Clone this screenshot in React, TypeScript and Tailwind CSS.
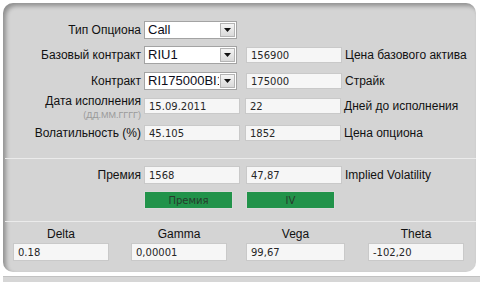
import React from "react";

const labelFont = "font-['Liberation_Sans',Arial,sans-serif] text-[12px] text-[#111]";
const inputFont = "font-['DejaVu_Sans',Verdana,sans-serif] text-[10px] text-[#262626]";

type FieldProps = { value: string; className?: string };

const Field: React.FC<FieldProps> = ({ value, className = "" }) => (
  <div
    className={`flex shrink-0 items-center overflow-hidden whitespace-nowrap border border-[#c9c9c9] bg-[#f6f6f6] pl-[4px] ${inputFont} ${className}`}
  >
    {value}
  </div>
);

const Select: React.FC<{ value: string }> = ({ value }) => (
  <div className="flex h-[18px] w-[93px] shrink-0 items-stretch border border-[#a3a3a3] bg-white">
    <div className="flex min-w-0 flex-1 items-center overflow-hidden whitespace-nowrap pl-[3px] font-['Liberation_Sans',Arial,sans-serif] text-[13px] text-[#0d0d1a]">
      {value}
    </div>
    <div className="m-px flex w-[15px] shrink-0 items-center justify-center border border-[#b4b4b4] bg-gradient-to-b from-[#f4f4f4] to-[#d9d9d9]">
      <svg width="7" height="4" viewBox="0 0 7 4" aria-hidden="true">
        <path d="M0 0h7L3.5 4z" fill="#111" />
      </svg>
    </div>
  </div>
);

const Label: React.FC<{ children: React.ReactNode }> = ({ children }) => (
  <div className={`w-[141px] shrink-0 pr-[3px] text-right whitespace-nowrap ${labelFont}`}>{children}</div>
);

const SideLabel: React.FC<{ children: React.ReactNode }> = ({ children }) => (
  <div className={`ml-[3px] whitespace-nowrap ${labelFont}`}>{children}</div>
);

const GreenButton: React.FC<{ text: string; className?: string }> = ({ text, className = "" }) => (
  <div
    className={`flex h-[18px] shrink-0 items-center justify-center border border-[#d9d9d9] bg-[#21934a] font-['DejaVu_Sans',Verdana,sans-serif] text-[10px] text-[#263a2c] ${className}`}
  >
    {text}
  </div>
);

const Greek: React.FC<{ name: string; value: string; className?: string }> = ({ name, value, className = "" }) => (
  <div className={`flex shrink-0 flex-col items-center ${className}`}>
    <div className={`h-[16px] leading-[16px] ${labelFont}`}>{name}</div>
    <Field value={value} className="mt-px h-[18px] w-full" />
  </div>
);

export default function App() {
  return (
    <div className="h-[282px] w-[482px] bg-white pl-[3px] pt-[3px]">
      <div className="h-[269px] w-[473px] rounded-[10px] bg-[#d4d4d4] shadow-[inset_3px_3px_4px_rgba(0,0,0,0.32)]">
        <div className="flex flex-col pt-[18px]">
          <div className="flex h-[18px] items-center">
            <Label>Тип Опциона</Label>
            <Select value="Call" />
          </div>
          <div className="mt-[7px] flex h-[18px] items-center">
            <Label>Базовый контракт</Label>
            <Select value="RIU1" />
            <Field value="156900" className="ml-[9px] h-[16px] w-[96px]" />
            <SideLabel>Цена базового актива</SideLabel>
          </div>
          <div className="mt-[8px] flex h-[18px] items-center">
            <Label>Контракт</Label>
            <Select value="RI175000BI1" />
            <Field value="175000" className="ml-[9px] h-[16px] w-[96px]" />
            <SideLabel>Страйк</SideLabel>
          </div>
          <div className="mt-[7px] flex h-[18px] items-center">
            <div className="w-[141px] shrink-0 self-start pr-[3px] text-right">
              <div className={`-mt-[3px] whitespace-nowrap leading-[14px] ${labelFont}`}>Дата исполнения</div>
              <div className="h-0 whitespace-nowrap font-['Liberation_Sans',Arial,sans-serif] text-[9px] leading-[14px] text-[#9a9a9a]">
                (ДД.ММ.ГГГГ)
              </div>
            </div>
            <Field value="15.09.2011" className="h-[16px] w-[96px]" />
            <Field value="22" className="ml-[5px] h-[16px] w-[96px]" />
            <SideLabel>Дней до исполнения</SideLabel>
          </div>
          <div className="mt-[9px] flex h-[18px] items-center">
            <Label>Волатильность (%)</Label>
            <Field value="45.105" className="h-[16px] w-[96px]" />
            <Field value="1852" className="ml-[5px] h-[16px] w-[96px]" />
            <SideLabel>Цена опциона</SideLabel>
          </div>

          <div className="ml-[2px] mt-[16px] h-px bg-[#ebebeb]" />

          <div className="mt-[7px] flex h-[18px] items-center">
            <Label>Премия</Label>
            <Field value="1568" className="h-[18px] w-[96px]" />
            <Field value="47,87" className="ml-[6px] h-[18px] w-[96px]" />
            <SideLabel>Implied Volatility</SideLabel>
          </div>
          <div className="mt-[7px] flex h-[18px] items-center pl-[141px]">
            <GreenButton text="Премия" className="w-[89px]" />
            <GreenButton text="IV" className="ml-[13px] w-[89px]" />
          </div>

          <div className="ml-[2px] mt-[12px] h-px bg-[#ebebeb]" />

          <div className="mt-[4px] flex items-end pl-[10px]">
            <Greek name="Delta" value="0.18" className="w-[96px]" />
            <Greek name="Gamma" value="0,00001" className="ml-[22px] w-[96px]" />
            <Greek name="Vega" value="99,67" className="ml-[19px] w-[99px]" />
            <Greek name="Theta" value="-102,20" className="ml-[23px] w-[96px]" />
          </div>
        </div>
      </div>
      <div className="mt-[4px] h-[6px] w-[477px] border-t border-[#c2c2c2] bg-[#d6d6d6]" />
    </div>
  );
}
